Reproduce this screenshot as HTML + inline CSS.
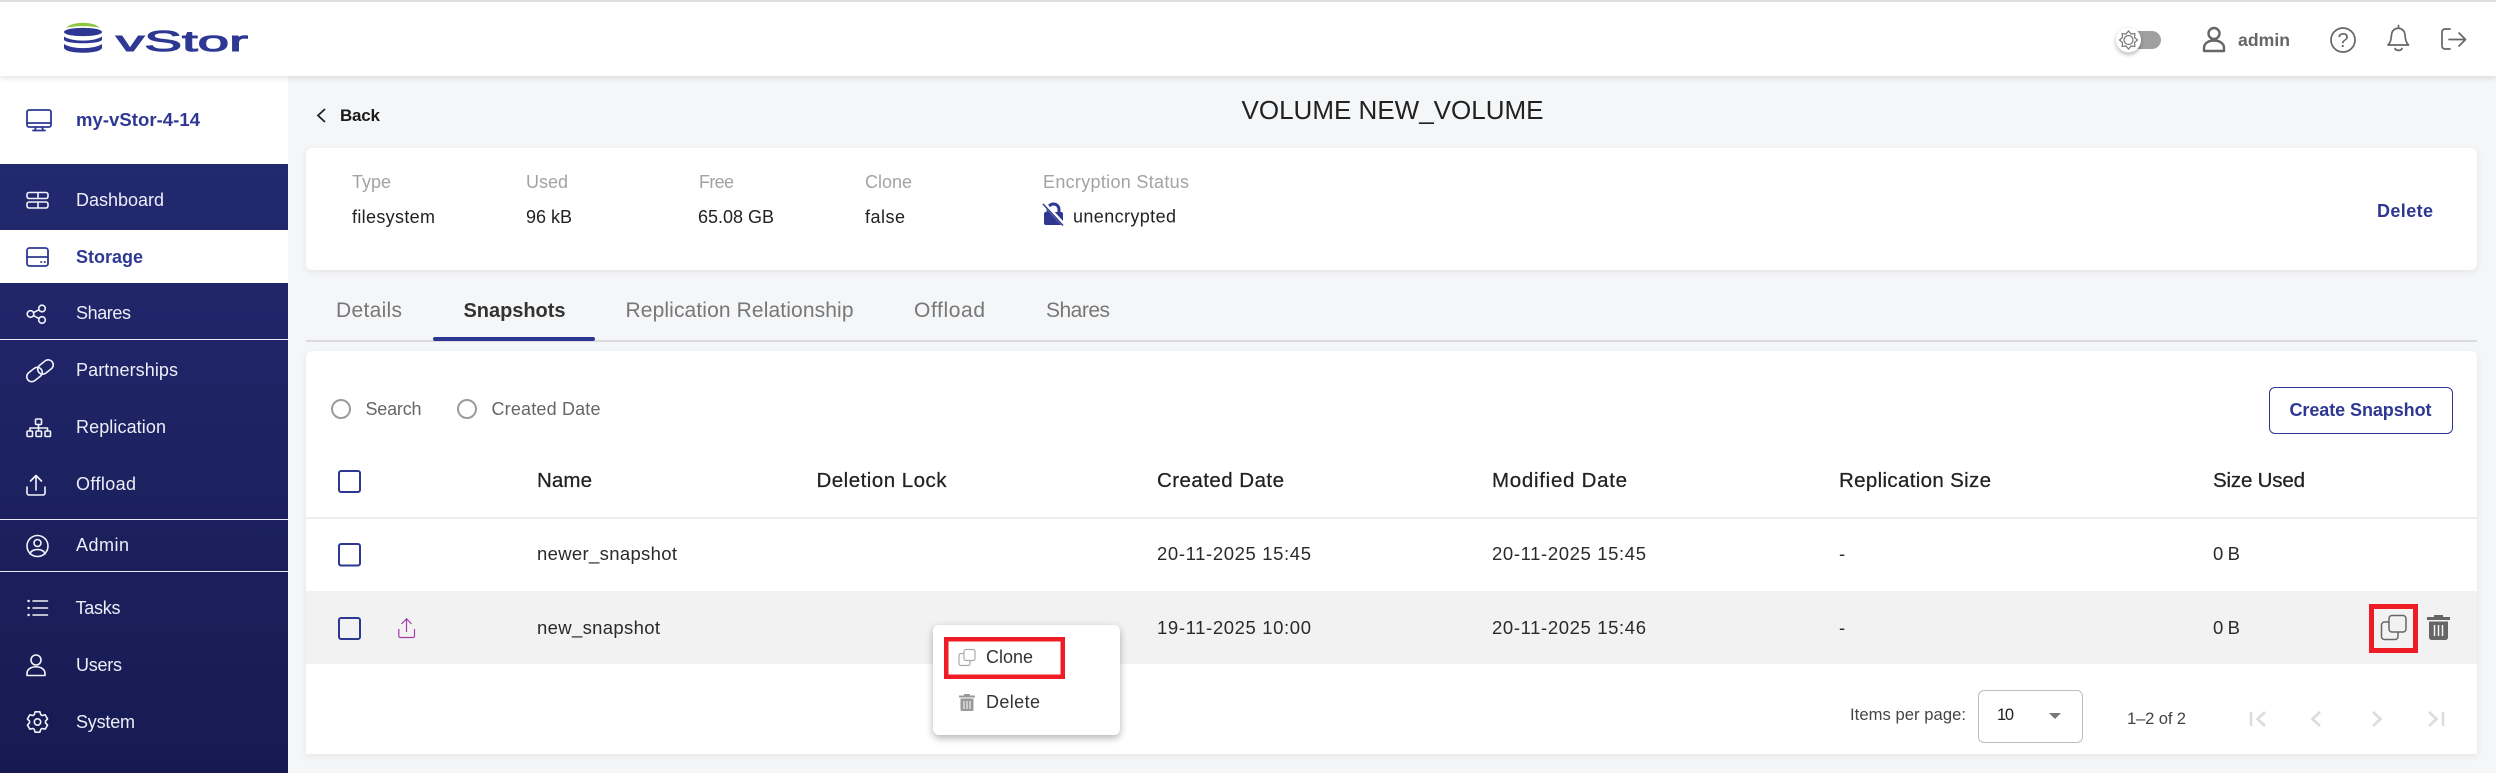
<!DOCTYPE html>
<html lang="en">
<head>
<meta charset="utf-8">
<title>vStor</title>
<style>
html,body{margin:0;padding:0;width:2496px;height:773px;overflow:hidden;background:#f5f6f8}
.b{position:absolute}
svg{position:absolute;left:0;top:0}
text{font-family:"Liberation Sans",sans-serif;font-size:18px;fill:#222}
.side{fill:#eceef8;font-size:18px}
.blue{fill:#2e3893;font-weight:bold;font-size:18px}
.lab{fill:#a3a3a3;font-size:18px}
.val{fill:#222;font-size:18px}
.tab{fill:#777;font-size:21px}
.th{fill:#222;font-size:20.5px;stroke:#222;stroke-width:.25px}
.td{fill:#2a2a2a;font-size:18.5px}
.w{fill:none;stroke:#f2f3fa;stroke-width:1.6;stroke-linecap:round;stroke-linejoin:round}
.bl{fill:none;stroke:#2e3893;stroke-width:1.8;stroke-linecap:round;stroke-linejoin:round}
.g{fill:none;stroke:#666;stroke-width:1.7;stroke-linecap:round;stroke-linejoin:round}
.pg{fill:none;stroke:#dcdcdc;stroke-width:2.6}
</style>
</head>
<body>
<div class="b" style="left:0;top:0;width:2496px;height:2px;background:#dedede;z-index:3"></div>
<div class="b" style="left:288px;top:76px;width:2208px;height:697px;background:#f5f6f8"></div>
<div class="b" style="left:0;top:76px;width:288px;height:697px;background:linear-gradient(180deg,#22296f 0%,#22296f 12%,#171a52 100%)"></div>
<div class="b" style="left:0;top:76px;width:288px;height:88px;background:#fff"></div>
<div class="b" style="left:0;top:230px;width:288px;height:53px;background:#fff"></div>
<div class="b" style="left:0;top:339px;width:288px;height:1px;background:#e8e9f4"></div>
<div class="b" style="left:0;top:519px;width:288px;height:1px;background:#e8e9f4"></div>
<div class="b" style="left:0;top:571px;width:288px;height:1px;background:#e8e9f4"></div>
<div class="b" style="left:0;top:0;width:2496px;height:76px;background:#fff;box-shadow:0 2px 6px rgba(0,0,0,.12)"></div>
<div class="b" style="left:306px;top:148px;width:2171px;height:122px;background:#fff;border-radius:6px;box-shadow:0 2px 8px rgba(0,0,0,.07)"></div>
<div class="b" style="left:306px;top:340px;width:2171px;height:1.5px;background:#dcdcdf"></div>
<div class="b" style="left:433px;top:337px;width:162px;height:3.5px;background:#2e3893;border-radius:2px"></div>
<div class="b" style="left:306px;top:351px;width:2171px;height:403px;background:#fff;border-radius:6px 6px 0 0;box-shadow:0 2px 8px rgba(0,0,0,.07)"></div>
<div class="b" style="left:306px;top:517px;width:2171px;height:1.5px;background:#eeeeee"></div>
<div class="b" style="left:306px;top:591px;width:2171px;height:73px;background:#f2f2f2"></div>
<div class="b" style="left:933px;top:625px;width:187px;height:110px;background:#fff;border-radius:6px;box-shadow:0 3px 8px rgba(0,0,0,.3)"></div>
<div class="b" style="left:1977.5px;top:689.5px;width:103px;height:51.5px;border:1px solid #bdbdbd;border-radius:6px;background:#fff"></div>
<div class="b" style="left:2268.5px;top:386.5px;width:182px;height:45px;border:1.5px solid #2e3893;border-radius:6px;background:#fff"></div>

<svg width="2496" height="773" viewBox="0 0 2496 773" xmlns="http://www.w3.org/2000/svg" style="z-index:4">
<!-- logo -->
<path d="M66 28 C72 21 94 21 100 28 C92 25.5 74 25.5 66 28Z" fill="#8cc63f"/>
<path d="M64 32 C64 26.5 102 26.5 102 32 C102 37.5 64 37.5 64 32Z" fill="#2e3893"/>
<path d="M64 36.5 C72 42 94 42 102 36.5 L102 39.5 C102 44.5 64 44.5 64 39.5Z" fill="#2e3893"/>
<path d="M64 44 C72 49.5 94 49.5 102 44 L102 47.5 C102 54.5 64 54.5 64 47.5Z" fill="#2e3893"/>
<text x="0" y="0" transform="translate(116 51) scale(1.95 1)" style="font-size:29px;fill:#2e3893;stroke:#2e3893;stroke-width:1px">vStor</text>

<!-- top right -->
<rect x="2126" y="31" width="35" height="18" rx="9" fill="#a0a0a0"/>
<circle cx="2128.5" cy="40" r="12.5" fill="#fff" style="filter:drop-shadow(0 2px 2px rgba(0,0,0,.3))"/>
<polygon transform="translate(2128.5 40)" points="9,0 6,2.49 6.36,6.36 2.49,6 0,9 -2.49,6 -6.36,6.36 -6,2.49 -9,0 -6,-2.49 -6.36,-6.36 -2.49,-6 0,-9 2.49,-6 6.36,-6.36 6,-2.49" fill="none" stroke="#777" stroke-width="1.2"/>
<circle cx="2128.5" cy="40" r="4.5" fill="none" stroke="#777" stroke-width="1.2"/>
<circle cx="2214" cy="33.5" r="5.5" fill="none" stroke="#666" stroke-width="2.4"/>
<path d="M2204 51 v-3 c0-10 20-10 20 0 v3Z" fill="none" stroke="#666" stroke-width="2.4" stroke-linejoin="round"/>
<text x="2238" y="46" textLength="52" style="font-size:17.6px;font-weight:bold;fill:#666">admin</text>
<circle cx="2343" cy="40" r="12" class="g"/>
<text x="2343" y="47" text-anchor="middle" style="font-size:20px;fill:#666">?</text>
<path class="g" d="M2388 45 c3-3 3-6 3.5-10 c.5-9 13-9 13.5 0 c.5 4 .5 7 3.5 10 Z M2398.5 27 v-1.5 M2395 48.5 c1 2.5 6 2.5 7 0" />
<path class="g" d="M2450 29 h-5 a3 3 0 0 0 -3 3 v14 a3 3 0 0 0 3 3 h5 M2449 39.500 h16 M2459 33 l6.500 6.500 l-6.500 6.500"/>

<!-- sidebar -->
<rect class="bl" x="27" y="110" width="24" height="17" rx="2"/>
<path class="bl" d="M27 123 h24 M36 127 l-1 3 M42 127 l1 3 M33 130.500 h12"/>
<text x="76" y="126" textLength="124" class="blue" style="font-size:18.5px">my-vStor-4-14</text>

<path class="w" d="M29 192.500 h17 a2 2 0 0 1 2 2 v2 a2 2 0 0 1 -2 2 h-17 a2 2 0 0 1 -2 -2 v-2 a2 2 0 0 1 2 -2Z M38 192.500 v6 M29 202 h17 a2 2 0 0 1 2 2 v2 a2 2 0 0 1 -2 2 h-17 a2 2 0 0 1 -2 -2 v-2 a2 2 0 0 1 2 -2Z M38 202 v6"/>
<text x="76" y="206" textLength="88" class="side">Dashboard</text>

<rect class="bl" x="27" y="248" width="21" height="18" rx="2.500"/>
<path class="bl" d="M27 257 h21 M41 262 h.5 M44.500 262 h.5"/>
<text x="76" y="263" textLength="67" class="blue">Storage</text>

<g class="w">
<circle cx="42" cy="308.500" r="3.300"/><circle cx="30.500" cy="314" r="3.300"/><circle cx="42" cy="320" r="3.300"/>
<path d="M33.500 312.500 L39 309.800 M33.500 315.700 L39 318.500"/>
</g>
<text x="76" y="319" textLength="55" class="side">Shares</text>

<g class="w">
<rect x="-8.500" y="-5" width="17" height="10" rx="5" transform="translate(34.500 374.500) rotate(-38)"/>
<rect x="-8.500" y="-5" width="17" height="10" rx="5" transform="translate(45.500 367) rotate(-38)"/>
</g>
<text x="76" y="376" textLength="102" class="side">Partnerships</text>

<g class="w">
<rect x="35.500" y="419" width="6" height="5.500" rx="1"/>
<rect x="27" y="431" width="5.500" height="5.500" rx="1"/><rect x="36" y="431" width="5.500" height="5.500" rx="1"/><rect x="45" y="431" width="5.500" height="5.500" rx="1"/>
<path d="M38.500 424.500 V431 M30 431 v-3 h17.500 v3"/>
</g>
<text x="76" y="433" textLength="90" class="side">Replication</text>

<path class="w" d="M36 476 V490 M30.500 481 L36 475.500 L41.500 481 M27 487 v6 a2 2 0 0 0 2 2 h14 a2 2 0 0 0 2 -2 v-6"/>
<text x="76" y="490" textLength="60" class="side">Offload</text>

<g class="w">
<circle cx="37.500" cy="546" r="10.500"/><circle cx="37.500" cy="543" r="3.500"/>
<path d="M30 554 c1-6 14-6 15 0"/>
</g>
<text x="76" y="551" textLength="53" class="side">Admin</text>

<path class="w" d="M33 601 H47.500 M33 608 H47.500 M33 615 H47.500"/>
<path d="M28.500 601 h.2 M28.500 608 h.2 M28.500 615 h.2" stroke="#f2f3fa" stroke-width="2.400" stroke-linecap="round"/>
<text x="75.500" y="614" textLength="45" class="side">Tasks</text>

<circle class="w" cx="36" cy="660" r="5"/>
<path class="w" d="M27 675.500 v-2 c0-9 18-9 18 0 v2Z"/>
<text x="76" y="671" textLength="46" class="side">Users</text>

<polygon class="w" transform="translate(37.500 722)" points="-3.25,-7.31 -2.36,-10.23 2.36,-10.23 3.25,-7.31 4.7,-6.47 7.68,-7.16 10.04,-3.07 7.96,-.84 7.96,.84 10.04,3.07 7.68,7.16 4.7,6.47 3.25,7.31 2.36,10.23 -2.36,10.23 -3.25,7.31 -4.7,6.47 -7.68,7.16 -10.04,3.07 -7.96,.84 -7.96,-.84 -10.04,-3.07 -7.68,-7.16 -4.7,-6.47"/>
<circle class="w" cx="37.500" cy="722" r="3.200"/>
<text x="76" y="728" textLength="59" class="side">System</text>

<!-- heading -->
<path d="M325 109 L318 115.500 L325 122" fill="none" stroke="#222" stroke-width="1.800"/>
<text x="340" y="121" textLength="40" style="font-size:17px;font-weight:bold;fill:#1a1a1a">Back</text>
<text x="1241.500" y="119" textLength="302" style="font-size:26px;fill:#222">VOLUME NEW_VOLUME</text>

<!-- info card -->
<text x="352" y="188" textLength="39" class="lab">Type</text>
<text x="352" y="223" textLength="83" class="val">filesystem</text>
<text x="526" y="188" textLength="42" class="lab">Used</text>
<text x="526" y="223" textLength="46" class="val">96 kB</text>
<text x="699" y="188" textLength="35" class="lab">Free</text>
<text x="698" y="223" textLength="76" class="val">65.08 GB</text>
<text x="865" y="188" textLength="47" class="lab">Clone</text>
<text x="865" y="223" textLength="40" class="val">false</text>
<text x="1043" y="188" textLength="146" class="lab">Encryption Status</text>
<path d="M1048 213 v-3.500 a5.500 5.500 0 0 1 11 0 v3.500" fill="none" stroke="#2e3893" stroke-width="3"/>
<rect x="1044" y="212" width="19" height="13" rx="2" fill="#2e3893"/>
<path d="M1044.500 204 L1064 225" stroke="#fff" stroke-width="4"/>
<path d="M1043 204 L1063 225.500" stroke="#2e3893" stroke-width="1.500"/>
<text x="1073" y="222.500" textLength="103" class="val">unencrypted</text>
<text x="2377" y="217" textLength="56" class="blue">Delete</text>

<!-- tabs -->
<text x="336" y="317" textLength="66" class="tab">Details</text>
<text x="463.500" y="317" textLength="102" class="tab" style="font-weight:bold;fill:#333;font-size:20px">Snapshots</text>
<text x="625.500" y="317" textLength="228" class="tab">Replication Relationship</text>
<text x="914" y="317" textLength="71" class="tab">Offload</text>
<text x="1046" y="317" textLength="64" class="tab">Shares</text>

<!-- filters -->
<circle cx="341" cy="409" r="9" fill="none" stroke="#9b9b9b" stroke-width="2"/>
<text x="365.500" y="415" textLength="56" style="fill:#666">Search</text>
<circle cx="467" cy="409" r="9" fill="none" stroke="#9b9b9b" stroke-width="2"/>
<text x="491.500" y="415" textLength="109" style="fill:#666">Created Date</text>
<text x="2289.500" y="416" textLength="142" class="blue">Create Snapshot</text>

<!-- table head -->
<rect x="339" y="471" width="21" height="21" rx="2" fill="none" stroke="#2e3893" stroke-width="2"/>
<text x="537" y="487" textLength="55" class="th">Name</text>
<text x="816.500" y="487" textLength="130" class="th">Deletion Lock</text>
<text x="1157" y="487" textLength="127" class="th">Created Date</text>
<text x="1492" y="487" textLength="135" class="th">Modified Date</text>
<text x="1839" y="487" textLength="152" class="th">Replication Size</text>
<text x="2213" y="487" textLength="92" class="th">Size Used</text>

<!-- rows -->
<rect x="339" y="544" width="21" height="21.500" rx="2" fill="none" stroke="#2e3893" stroke-width="2"/>
<text x="537" y="560" textLength="140" class="td">newer_snapshot</text>
<text x="1157" y="560" textLength="154" class="td">20-11-2025 15:45</text>
<text x="1492" y="560" textLength="154" class="td">20-11-2025 15:45</text>
<text x="1839" y="560" class="td">-</text>
<text x="2213" y="560" textLength="27" class="td">0 B</text>

<rect x="339" y="618" width="21" height="21" rx="2" fill="none" stroke="#2e3893" stroke-width="2"/>
<path d="M406.500 632 V619 M401.500 624 L406.500 618.700 L411.500 624 M398.800 629 V636 a1.500 1.500 0 0 0 1.500 1.500 H413 a1.500 1.500 0 0 0 1.500 -1.500 V629" fill="none" stroke="#a23ea6" stroke-width="1.200"/>
<text x="537" y="634" textLength="123" class="td">new_snapshot</text>
<text x="1157" y="634" textLength="154" class="td">19-11-2025 10:00</text>
<text x="1492" y="634" textLength="154" class="td">20-11-2025 15:46</text>
<text x="1839" y="634" class="td">-</text>
<text x="2213" y="634" textLength="27" class="td">0 B</text>

<rect x="2371.500" y="606.500" width="44" height="44" fill="none" stroke="#ee1c25" stroke-width="5"/>
<rect x="2389" y="615.500" width="17" height="16.500" rx="3" fill="none" stroke="#666" stroke-width="1.500"/>
<path d="M2388.500 622 h-4 a3 3 0 0 0 -3 3 v11.500 a3 3 0 0 0 3 3 h10.500 a3 3 0 0 0 3 -3 v-4" fill="none" stroke="#666" stroke-width="1.500"/>
<path d="M2434 617 v-2 h9 v2 h7 v3 h-23 v-3Z M2429 621.500 h19 v16 a2.500 2.500 0 0 1 -2.500 2.500 h-14 a2.500 2.500 0 0 1 -2.500 -2.500Z" fill="#666"/>
<path d="M2434.500 625 v11 M2438.500 625 v11 M2442.500 625 v11" stroke="#f2f2f2" stroke-width="1.500"/>

<!-- menu -->
<rect x="946.250" y="639.250" width="116.500" height="37.500" fill="none" stroke="#ee1c25" stroke-width="4.500"/>
<rect x="964" y="649.500" width="11" height="11" rx="2" fill="none" stroke="#aaa" stroke-width="1.200"/>
<path d="M963.500 653.500 h-2.500 a2 2 0 0 0 -2 2 v8 a2 2 0 0 0 2 2 h7 a2 2 0 0 0 2 -2 v-3" fill="none" stroke="#aaa" stroke-width="1.200"/>
<text x="986" y="663" textLength="47" style="fill:#333">Clone</text>
<path d="M964 695.500 v-1.500 h6 v1.500 h5 v2 h-16 v-2Z M960.500 698.500 h13 v11 a1.500 1.500 0 0 1 -1.500 1.500 h-10 a1.500 1.500 0 0 1 -1.500 -1.500Z" fill="#999"/>
<path d="M964 701 v8 M967 701 v8 M970 701 v8" stroke="#fff" stroke-width="1"/>
<text x="986" y="708" textLength="54" style="fill:#333">Delete</text>

<!-- pagination -->
<text x="1850" y="720" textLength="116" style="font-size:16.6px;fill:#444">Items per page:</text>
<text x="1997" y="720" textLength="17" style="font-size:16.500px;fill:#222">10</text>
<path d="M2049 713 H2061 L2055 719Z" fill="#777"/>
<text x="2127" y="724" textLength="59" style="font-size:16.6px;fill:#444">1–2 of 2</text>
<path class="pg" d="M2251 712 V726 M2265 712 L2257.500 719 L2265 726"/>
<path class="pg" d="M2320 712 L2312.500 719 L2320 726"/>
<path class="pg" d="M2373 712 L2380.500 719 L2373 726"/>
<path class="pg" d="M2429 712 L2436.500 719 L2429 726 M2443 712 V726"/>
</svg>
</body>
</html>
